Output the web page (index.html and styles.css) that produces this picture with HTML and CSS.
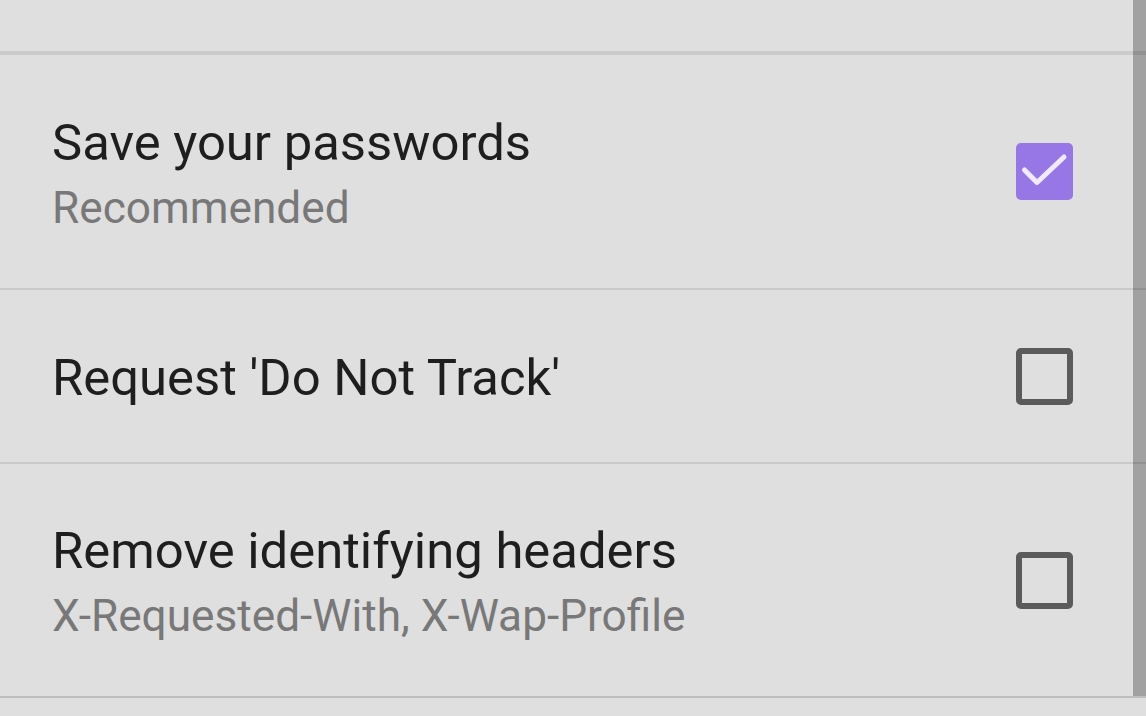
FILE: index.html
```html
<!DOCTYPE html>
<html>
<head>
<meta charset="utf-8">
<link rel="stylesheet" href="styles.css">
</head>
<body>
<div class="screen">
  <div class="list">
    <div class="row row-top"></div>
    <div class="row row-tall">
      <div class="text">
        <div class="title">Save your passwords</div>
        <div class="summary">Recommended</div>
      </div>
      <div class="checkbox checked">
        <svg viewBox="0 0 57 57" width="57" height="57"><path d="M8.5 27 L21 39.5 L48 14" fill="none" stroke="#f1eaff" stroke-width="5" stroke-linecap="round" stroke-linejoin="round"/></svg>
      </div>
    </div>
    <div class="row row-short">
      <div class="text">
        <div class="title">Request 'Do Not Track'</div>
      </div>
      <div class="checkbox"></div>
    </div>
    <div class="row row-tall row-last">
      <div class="text">
        <div class="title">Remove identifying headers</div>
        <div class="summary">X-Requested-With, X-Wap-Profile</div>
      </div>
      <div class="checkbox"></div>
    </div>
  </div>
  <div class="scrollbar"></div>
</div>
</body>
</html>
```
FILE: styles.css
```css
html, body {
  margin: 0;
  padding: 0;
  background: #dfdfdf;
}
body {
  font-family: Roboto, "Noto Sans", sans-serif;
  width: 1146px;
  height: 716px;
  overflow: hidden;
}
.screen {
  position: relative;
  width: 1146px;
  height: 716px;
  background: #dfdfdf;
}
.list {
  display: flex;
  flex-direction: column;
}
.row {
  display: flex;
  align-items: center;
  justify-content: space-between;
  padding: 0 73px 0 52px;
  border-bottom: 2px solid #c9c9c9;
}
.row-top {
  height: 51px;
  border-bottom: 4px solid #cbcbcb;
}
.row-tall {
  height: 233px;
}
.row-short {
  height: 172px;
}
.row-last {
  height: 232px;
  border-bottom: 2px solid #bdbdbd;
}
.text {
  display: flex;
  flex-direction: column;
  gap: 10px;
  padding-top: 4px;
}
.title {
  font-size: 50.8px;
  line-height: 58px;
  color: #1e1e1e;
  white-space: nowrap;
}
.summary {
  font-size: 44.2px;
  line-height: 52px;
  color: #787878;
  white-space: nowrap;
}
.checkbox {
  width: 45px;
  height: 45px;
  border: 6px solid #5b5b5b;
  border-radius: 5px;
  flex: none;
}
.checkbox.checked {
  width: 57px;
  height: 57px;
  border: none;
  background: #9776e6;
  display: flex;
}
.scrollbar {
  position: absolute;
  top: 0;
  right: 0;
  width: 13px;
  height: 696px;
  background: rgba(0, 0, 0, 0.28);
}
```
